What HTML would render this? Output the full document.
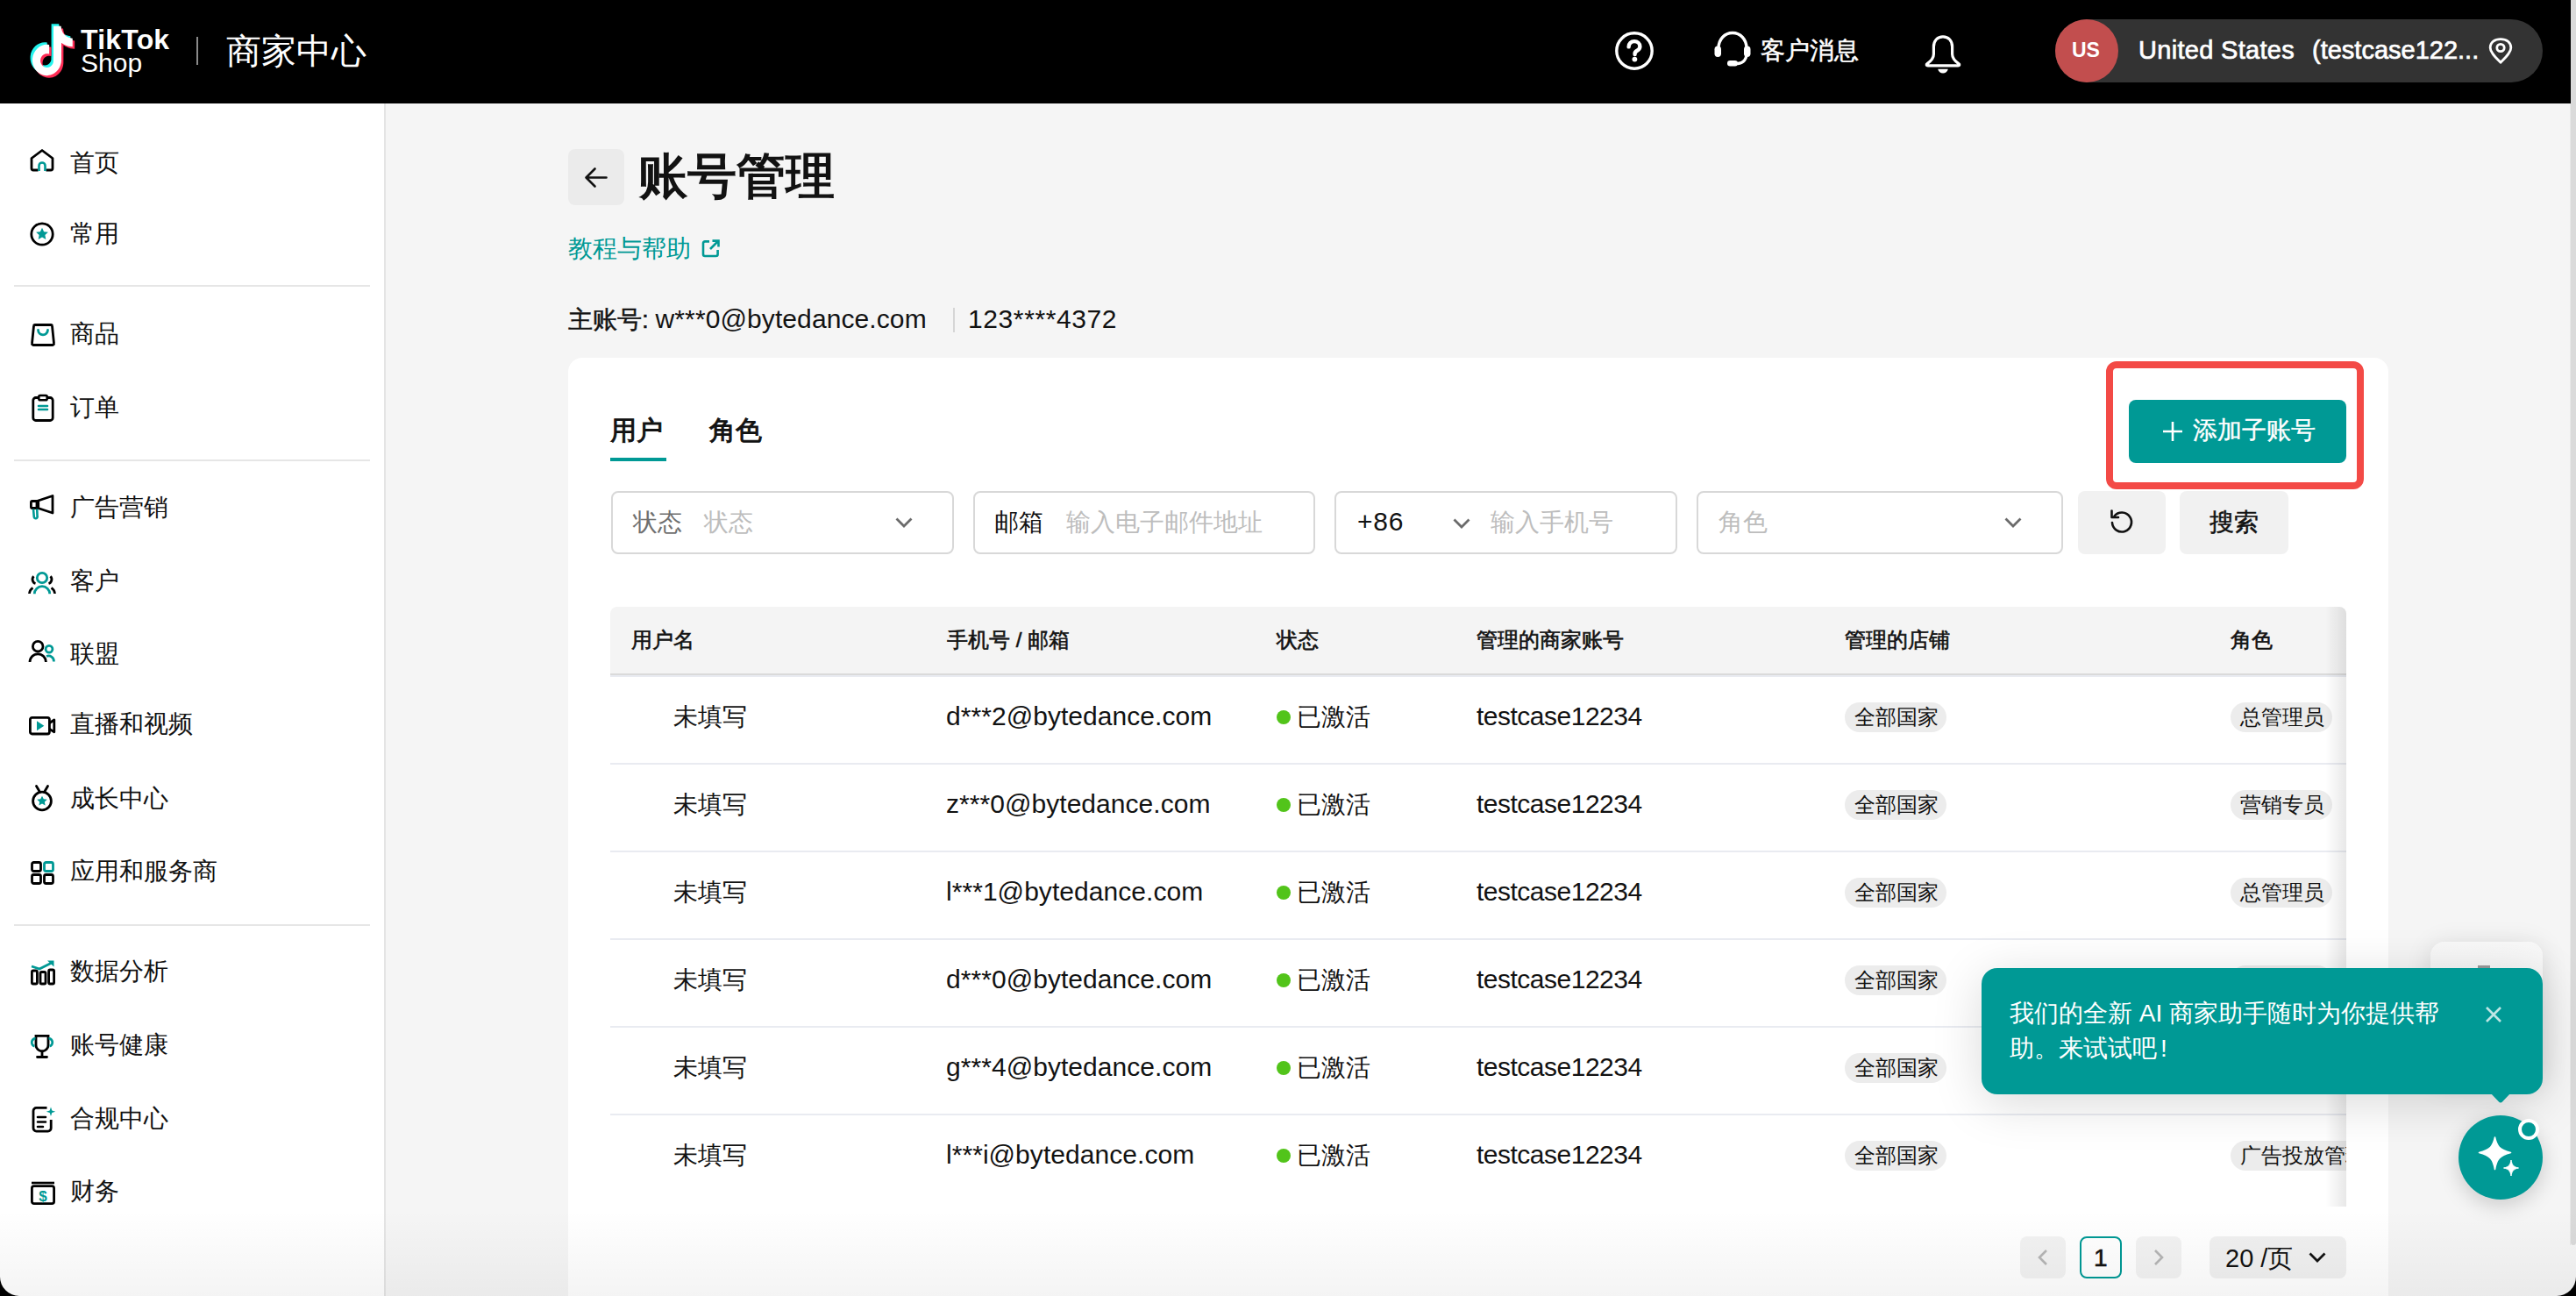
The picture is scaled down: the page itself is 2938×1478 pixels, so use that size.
<!DOCTYPE html><html><head><meta charset='utf-8'><style>
*{box-sizing:border-box}
html,body{margin:0;padding:0}
body{width:2938px;height:1478px;position:relative;overflow:hidden;background:#f5f5f5;font-family:"Liberation Sans",sans-serif;color:#121212}
.abs{position:absolute}
.t{position:absolute;white-space:nowrap;line-height:1}
svg{position:absolute;overflow:visible}
</style></head><body><div class="abs" style="left:0;top:0;width:2932px;height:118px;background:#000"></div>
<div class="abs" style="left:2932px;top:0;width:6px;height:1420px;background:#dadada;border-radius:0 0 3px 3px"></div>
<div class="abs" style="left:2931px;top:118px;width:1px;height:1302px;background:#e8e8e8"></div>
<svg style="left:32px;top:27px" width="54" height="62" viewBox="-0.7 -1.2 24.6 26.4" preserveAspectRatio="none">
<path d="M12.525.02c1.31-.02 2.61-.01 3.91-.02.08 1.53.63 3.09 1.75 4.17 1.12 1.11 2.7 1.62 4.24 1.79v4.03c-1.44-.05-2.89-.35-4.2-.97-.57-.26-1.1-.59-1.62-.93-.01 2.92.01 5.84-.02 8.75-.08 1.4-.54 2.79-1.35 3.94-1.31 1.920-3.58 3.17-5.91 3.21-1.43.08-2.86-.31-4.08-1.03-2.02-1.19-3.44-3.37-3.65-5.710-.02-.5-.03-1-.01-1.49.18-1.9 1.12-3.72 2.58-4.96 1.66-1.440 3.98-2.13 6.15-1.72.02 1.48-.04 2.96-.04 4.44-.99-.32-2.15-.23-3.02.37-.63.41-1.11 1.04-1.36 1.750-.21.51-.15 1.07-.14 1.61.24 1.64 1.82 3.02 3.5 2.87 1.12-.01 2.19-.66 2.77-1.61.19-.33.4-.67.41-1.06.1-1.79.06-3.57.07-5.36.01-4.03-.01-8.05.02-12.07z" fill="#25f4ee" transform="translate(-1.1,-1.1)"/><path d="M12.525.02c1.31-.02 2.61-.01 3.91-.02.08 1.53.63 3.09 1.75 4.17 1.12 1.11 2.7 1.62 4.24 1.79v4.03c-1.44-.05-2.89-.35-4.2-.97-.57-.26-1.1-.59-1.62-.93-.01 2.92.01 5.84-.02 8.75-.08 1.4-.54 2.79-1.35 3.94-1.31 1.920-3.58 3.17-5.91 3.21-1.43.08-2.86-.31-4.08-1.03-2.02-1.19-3.44-3.37-3.65-5.710-.02-.5-.03-1-.01-1.49.18-1.9 1.12-3.72 2.58-4.96 1.66-1.440 3.98-2.13 6.15-1.72.02 1.48-.04 2.96-.04 4.44-.99-.32-2.15-.23-3.02.37-.63.41-1.11 1.04-1.36 1.750-.21.51-.15 1.07-.14 1.61.24 1.64 1.82 3.02 3.5 2.87 1.12-.01 2.19-.66 2.77-1.61.19-.33.4-.67.41-1.06.1-1.79.06-3.57.07-5.36.01-4.03-.01-8.05.02-12.07z" fill="#fe2c55" transform="translate(1.1,1.1)"/><path d="M12.525.02c1.31-.02 2.61-.01 3.91-.02.08 1.53.63 3.09 1.75 4.17 1.12 1.11 2.7 1.62 4.24 1.79v4.03c-1.44-.05-2.89-.35-4.2-.97-.57-.26-1.1-.59-1.62-.93-.01 2.92.01 5.84-.02 8.75-.08 1.4-.54 2.79-1.35 3.94-1.31 1.920-3.58 3.17-5.91 3.21-1.43.08-2.86-.31-4.08-1.03-2.02-1.19-3.44-3.37-3.65-5.710-.02-.5-.03-1-.01-1.49.18-1.9 1.12-3.72 2.58-4.96 1.66-1.440 3.98-2.13 6.15-1.72.02 1.48-.04 2.96-.04 4.44-.99-.32-2.15-.23-3.02.37-.63.41-1.11 1.04-1.36 1.750-.21.51-.15 1.07-.14 1.61.24 1.64 1.82 3.02 3.5 2.87 1.12-.01 2.19-.66 2.77-1.61.19-.33.4-.67.41-1.06.1-1.79.06-3.57.07-5.36.01-4.03-.01-8.05.02-12.07z" fill="#fff"/></svg>
<div class="t" style="left:92px;top:29px;font-size:32px;font-weight:bold;color:#fff;letter-spacing:0.2px">TikTok</div>
<div class="t" style="left:92px;top:57px;font-size:30px;color:#fff">Shop</div>
<div class="abs" style="left:224px;top:42px;width:2px;height:32px;background:#8a8a8a"></div>
<div class="t" style="left:258px;top:38px;font-size:40px;color:#fff">商家中心</div>
<svg style="left:1842px;top:36px" width="44" height="44" viewBox="0 0 44 44">
<circle cx="22" cy="22" r="20.2" fill="none" stroke="#fff" stroke-width="3.4"/>
<path d="M15.6 17.4c0-3.7 2.8-6.3 6.4-6.3s6.4 2.5 6.4 5.8c0 3-2 4.2-3.6 5.1-1.5.9-2.2 1.6-2.2 3.1v1" fill="none" stroke="#fff" stroke-width="4.4" stroke-linecap="round"/>
<circle cx="22.4" cy="31.6" r="2.9" fill="#fff"/></svg>
<svg style="left:1955px;top:34px" width="42" height="42" viewBox="0 0 42 42">
<path d="M5 21C5 11 12 3.5 21 3.5S37 11 37 21v6c0 6-3 11-10 11.5" fill="none" stroke="#fff" stroke-width="3.4" stroke-linecap="round"/>
<rect x="0.5" y="18.5" width="7.5" height="12.5" rx="3.7" fill="#fff"/>
<rect x="34" y="18.5" width="7.5" height="12.5" rx="3.7" fill="#fff"/>
<rect x="15" y="35" width="12" height="6.5" rx="3.2" fill="#fff"/></svg>
<div class="t" style="left:2008px;top:44px;font-size:28px;color:#fff;-webkit-text-stroke:0.5px #fff">客户消息</div>
<svg style="left:2195px;top:40px" width="42" height="44" viewBox="0 0 42 44">
<path d="M21 1.8c-6.3 0-10.6 4.8-10.6 11.5v8.5c0 4.6-3.5 8.2-7.3 10.8-1.5 1-0.9 2.3 0.7 2.3h34.4c1.6 0 2.2-1.3 0.7-2.3-3.8-2.6-7.3-6.2-7.3-10.8v-8.5C31.6 6.6 27.3 1.8 21 1.8z" fill="none" stroke="#fff" stroke-width="3.2" stroke-linejoin="round"/>
<path d="M15.2 38.8h11.6c-.6 3-3 4.8-5.8 4.8s-5.2-1.8-5.8-4.8z" fill="#fff"/></svg>
<div class="abs" style="left:2344px;top:22px;width:556px;height:72px;border-radius:36px;background:#333333"></div>
<div class="abs" style="left:2344px;top:22px;width:72px;height:72px;border-radius:36px;background:#c24e4e"></div>
<div class="t" style="left:2363px;top:46px;font-size:23px;font-weight:bold;color:#fff">US</div>
<div class="t" style="left:2439px;top:43px;font-size:29px;color:#fff;-webkit-text-stroke:0.7px #fff;letter-spacing:0.3px">United States</div>
<div class="t" style="left:2637px;top:43px;font-size:29px;color:#fff;-webkit-text-stroke:0.7px #fff;letter-spacing:0px">(testcase122...</div>
<svg style="left:2838px;top:43px" width="28" height="30" viewBox="0 0 28 30">
<path d="M14 28.3C8.5 22.5 2.2 16.8 2.2 11.4 2.2 5 7.4 1.6 14 1.6S25.8 5 25.8 11.4c0 5.4-6.3 11.1-11.8 16.9z" fill="none" stroke="#fff" stroke-width="2.8" stroke-linejoin="round"/>
<circle cx="14" cy="11.5" r="4.2" fill="none" stroke="#fff" stroke-width="2.8"/></svg>
<div class="abs" style="left:0;top:118px;width:438px;height:1360px;background:#fff"></div>
<div class="abs" style="left:438px;top:118px;width:2px;height:1360px;background:#e4e4e4"></div>
<div class="abs" style="left:16px;top:325px;width:406px;height:2px;background:#e6e6e6"></div>
<div class="abs" style="left:16px;top:524px;width:406px;height:2px;background:#e6e6e6"></div>
<div class="abs" style="left:16px;top:1054px;width:406px;height:2px;background:#e6e6e6"></div>
<svg style="left:34px;top:168px" width="28" height="28" viewBox="0 0 28 28"><path d="M2 12.5L14 3.5l12 9V24a2 2 0 0 1-2 2H4a2 2 0 0 1-2-2z" fill="none" stroke="#000" stroke-width="2.8" stroke-linejoin="round"/><rect x="9.5" y="17" width="9" height="11" fill="#fff"/><path d="M10.5 27v-6a3.5 3.5 0 0 1 7 0v6" fill="none" stroke="#009995" stroke-width="2.6"/></svg>
<div class="t" style="left:80px;top:172px;font-size:28px;color:#121212">首页</div>
<svg style="left:34px;top:253px" width="28" height="28" viewBox="0 0 28 28"><circle cx="14" cy="14" r="12.2" fill="none" stroke="#000" stroke-width="2.8"/><path d="M14 6.8l2.1 4.4 4.8.6-3.5 3.3.9 4.8-4.3-2.3-4.3 2.3.9-4.8-3.5-3.3 4.8-.6z" fill="#009995"/></svg>
<div class="t" style="left:80px;top:253px;font-size:28px;color:#121212">常用</div>
<svg style="left:35px;top:368px" width="28" height="27" viewBox="0 0 28 27"><path d="M5 2.5h18a1.5 1.5 0 0 1 1.5 1.4l2 19.8a1.5 1.5 0 0 1-1.5 1.8H3a1.5 1.5 0 0 1-1.5-1.8l2-19.8A1.5 1.5 0 0 1 5 2.5z" fill="none" stroke="#000" stroke-width="2.8" stroke-linejoin="round"/><path d="M8.5 8.3a5.5 5.5 0 0 0 11 0" fill="none" stroke="#009995" stroke-width="2.8" stroke-linecap="round"/></svg>
<div class="t" style="left:80px;top:367px;font-size:28px;color:#121212">商品</div>
<svg style="left:36px;top:450px" width="26" height="31" viewBox="0 0 26 31"><rect x="1.8" y="3.5" width="22.4" height="26" rx="3" fill="none" stroke="#000" stroke-width="2.8"/><rect x="8.3" y="1" width="9.4" height="5.2" rx="1.5" fill="#fff" stroke="#000" stroke-width="2.6"/><path d="M8 13h10M8 17h10" stroke="#009995" stroke-width="2.6" stroke-linecap="round"/></svg>
<div class="t" style="left:80px;top:451px;font-size:28px;color:#121212">订单</div>
<svg style="left:34px;top:565px" width="28" height="27" viewBox="0 0 28 27"><path d="M8 6.5l18-6v19.5l-18-6z" fill="none" stroke="#000" stroke-width="2.8" stroke-linejoin="round"/><rect x="1.4" y="6.5" width="8.3" height="8" rx="1.5" fill="none" stroke="#000" stroke-width="2.8"/><path d="M4 15.5l.8 9a1.9 1.9 0 0 0 3.8-.3l-.4-8.7" fill="none" stroke="#009995" stroke-width="2.6"/></svg>
<div class="t" style="left:80px;top:565px;font-size:28px;color:#121212">广告营销</div>
<svg style="left:32px;top:651px" width="32" height="27" viewBox="0 0 32 27"><circle cx="16" cy="8" r="5.7" fill="none" stroke="#009995" stroke-width="2.8"/><path d="M7.3 26.3a8.7 8.7 0 0 1 17.4 0" fill="none" stroke="#009995" stroke-width="2.8"/><path d="M6.5 6.2a5 5 0 0 0 2 8.3M25.5 6.2a5 5 0 0 1-2 8.3M1.5 26a8 8 0 0 1 4-6.5M30.5 26a8 8 0 0 0-4-6.5" fill="none" stroke="#000" stroke-width="2.8"/></svg>
<div class="t" style="left:80px;top:649px;font-size:28px;color:#121212">客户</div>
<svg style="left:33px;top:730px" width="29" height="27" viewBox="0 0 29 27"><circle cx="10.2" cy="7.2" r="5.8" fill="none" stroke="#000" stroke-width="2.8"/><path d="M1 25a9.2 9.2 0 0 1 18.4 0" fill="none" stroke="#000" stroke-width="2.8"/><circle cx="23" cy="10.2" r="3.9" fill="none" stroke="#009995" stroke-width="2.8"/><path d="M20 18.5a6 6 0 0 1 8.4 6" fill="none" stroke="#009995" stroke-width="2.8"/></svg>
<div class="t" style="left:80px;top:732px;font-size:28px;color:#121212">联盟</div>
<svg style="left:33px;top:817px" width="30" height="23" viewBox="0 0 30 23"><rect x="1.4" y="1.4" width="22" height="18.6" rx="2.2" fill="none" stroke="#000" stroke-width="2.8"/><path d="M23.5 7.5l5.3-3.5v13.8l-5.3-3.5" fill="none" stroke="#000" stroke-width="2.8" stroke-linejoin="round"/><path d="M9 5.3l8.3 5.5-8.3 5.5z" fill="#009995"/></svg>
<div class="t" style="left:80px;top:812px;font-size:28px;color:#121212">直播和视频</div>
<svg style="left:36px;top:895px" width="25" height="31" viewBox="0 0 25 31"><circle cx="12" cy="18.5" r="10.4" fill="none" stroke="#000" stroke-width="2.8"/><path d="M5.5 1.5l3.8 6.5M18.5 1.5l-3.8 6.5" stroke="#000" stroke-width="2.8" stroke-linecap="round"/><path d="M12 12.7l1.8 3.6 4 .5-2.9 2.8.7 3.9-3.6-1.9-3.6 1.9.7-3.9-2.9-2.8 4-.5z" fill="#009995"/></svg>
<div class="t" style="left:80px;top:897px;font-size:28px;color:#121212">成长中心</div>
<svg style="left:35px;top:982px" width="27" height="27" viewBox="0 0 27 27"><rect x="1.5" y="1.5" width="10" height="10" rx="2" fill="none" stroke="#000" stroke-width="2.8"/><rect x="15.5" y="1.5" width="10" height="10" rx="2" fill="none" stroke="#009995" stroke-width="2.8"/><rect x="1.5" y="15.5" width="10" height="10" rx="2" fill="none" stroke="#000" stroke-width="2.8"/><rect x="15.5" y="15.5" width="10" height="10" rx="2" fill="none" stroke="#000" stroke-width="2.8"/></svg>
<div class="t" style="left:80px;top:980px;font-size:28px;color:#121212">应用和服务商</div>
<svg style="left:35px;top:1095px" width="28" height="28" viewBox="0 0 28 28"><rect x="1.4" y="12" width="6" height="15" rx="1.5" fill="none" stroke="#000" stroke-width="2.8"/><rect x="11" y="13.5" width="6" height="13.5" rx="1.5" fill="none" stroke="#000" stroke-width="2.8"/><rect x="20.6" y="11" width="6" height="16" rx="1.5" fill="none" stroke="#000" stroke-width="2.8"/><path d="M1 7l9 3 14-7" fill="none" stroke="#009995" stroke-width="2.8"/><path d="M19 0.5h7.5v7z" fill="#009995"/></svg>
<div class="t" style="left:80px;top:1094px;font-size:28px;color:#121212">数据分析</div>
<svg style="left:34px;top:1180px" width="28" height="28" viewBox="0 0 28 28"><path d="M7 1.4h14v10.5a7 7 0 0 1-14 0z" fill="none" stroke="#000" stroke-width="2.8"/><path d="M14 19v6M8.5 25.5h11" stroke="#000" stroke-width="2.8" stroke-linecap="round"/><path d="M6.5 4.5a3.5 4 0 0 0-1 8.5M21.5 4.5a3.5 4 0 0 1 1 8.5" fill="none" stroke="#009995" stroke-width="2.8"/></svg>
<div class="t" style="left:80px;top:1178px;font-size:28px;color:#121212">账号健康</div>
<svg style="left:36px;top:1262px" width="28" height="30" viewBox="0 0 28 30"><path d="M17.5 1.4H5.5a3.5 3.5 0 0 0-3.5 3.5v19.7a3.5 3.5 0 0 0 3.5 3.5h13.2a3.5 3.5 0 0 0 3.5-3.5V15" fill="none" stroke="#000" stroke-width="2.8"/><path d="M7 12h9M7 17.5h9M7 23h6" stroke="#000" stroke-width="2.6" stroke-linecap="round"/><path d="M22 0.5l1.3 3.9 3.9 1.3-3.9 1.3L22 10.9l-1.3-3.9-3.9-1.3 3.9-1.3z" fill="#009995"/></svg>
<div class="t" style="left:80px;top:1262px;font-size:28px;color:#121212">合规中心</div>
<svg style="left:35px;top:1347px" width="28" height="27" viewBox="0 0 28 27"><path d="M1 2h26" stroke="#000" stroke-width="2.6"/><rect x="1.4" y="5.6" width="25.2" height="20" rx="2.4" fill="none" stroke="#000" stroke-width="2.8"/><text x="14" y="22.8" text-anchor="middle" font-family="Liberation Sans" font-weight="bold" font-size="17" fill="#009995">$</text></svg>
<div class="t" style="left:80px;top:1345px;font-size:28px;color:#121212">财务</div>
<div class="abs" style="left:648px;top:170px;width:64px;height:64px;border-radius:8px;background:#ebebeb"></div>
<svg style="left:666px;top:189px" width="28" height="28" viewBox="0 0 28 28"><path d="M25.5 13.5H3M12.5 3.5L2.5 13.5l10 10" fill="none" stroke="#121212" stroke-width="2.6" stroke-linecap="round" stroke-linejoin="round"/></svg>
<div class="t" style="left:728px;top:173px;font-size:56px;font-weight:bold;color:#121212">账号管理</div>
<div class="t" style="left:648px;top:270px;font-size:28px;color:#009995">教程与帮助</div>
<svg style="left:800px;top:273px" width="21" height="21" viewBox="0 0 21 21"><path d="M9 2.4H4a2 2 0 0 0-2 2V17a2 2 0 0 0 2 2h12.6a2 2 0 0 0 2-2v-5" fill="none" stroke="#009995" stroke-width="2.6"/><path d="M10 11L19 2M12.5 1.6h7v7" fill="none" stroke="#009995" stroke-width="2.6"/></svg>
<div class="t" style="left:648px;top:349px;font-size:28px;color:#121212"><span style="-webkit-text-stroke:0.5px #121212">主账号:</span> <span style="font-size:30px;letter-spacing:0.1px">w***0@bytedance.com</span></div>
<div class="abs" style="left:1087px;top:351px;width:2px;height:28px;background:#d6d6d6"></div>
<div class="t" style="left:1104px;top:349px;font-size:30px;letter-spacing:0.6px;color:#121212">123****4372</div>
<div class="abs" style="left:648px;top:408px;width:2076px;height:1200px;border-radius:16px;background:#fff"></div>
<div class="t" style="left:696px;top:476px;font-size:30px;-webkit-text-stroke:1px #121212;color:#121212">用户</div>
<div class="abs" style="left:696px;top:522px;width:64px;height:4px;background:#009995"></div>
<div class="t" style="left:809px;top:476px;font-size:30px;-webkit-text-stroke:1px #121212;color:#121212">角色</div>
<div class="abs" style="left:2402px;top:412px;width:294px;height:146px;border:8px solid #f34a46;border-radius:12px"></div>
<div class="abs" style="left:2428px;top:456px;width:248px;height:72px;border-radius:8px;background:#009995"></div>
<svg style="left:2466px;top:480px" width="24" height="24" viewBox="0 0 24 24"><path d="M12 1v22M1 12h22" stroke="#fff" stroke-width="2.6"/></svg>
<div class="t" style="left:2501px;top:477px;font-size:28px;color:#fff;-webkit-text-stroke:0.4px #fff">添加子账号</div>
<div class="abs" style="left:697px;top:560px;width:391px;height:72px;border:2px solid #d8d8d8;border-radius:8px;background:#fff"></div>
<div class="abs" style="left:1110px;top:560px;width:390px;height:72px;border:2px solid #d8d8d8;border-radius:8px;background:#fff"></div>
<div class="abs" style="left:1522px;top:560px;width:391px;height:72px;border:2px solid #d8d8d8;border-radius:8px;background:#fff"></div>
<div class="abs" style="left:1935px;top:560px;width:418px;height:72px;border:2px solid #d8d8d8;border-radius:8px;background:#fff"></div>
<div class="t" style="left:722px;top:582px;font-size:28px;color:#6f6f6f">状态</div>
<div class="t" style="left:803px;top:582px;font-size:28px;color:#bdbdbd">状态</div>
<svg style="left:1021px;top:590px" width="20" height="12" viewBox="0 0 20 12"><path d="M1.5 1.5L10 10l8.5-8.5" fill="none" stroke="#6b6b6b" stroke-width="2.8"/></svg>
<div class="t" style="left:1134px;top:582px;font-size:28px;color:#121212">邮箱</div>
<div class="t" style="left:1216px;top:582px;font-size:28px;color:#bdbdbd">输入电子邮件地址</div>
<div class="t" style="left:1548px;top:580px;font-size:30px;letter-spacing:0.8px;color:#121212">+86</div>
<svg style="left:1657px;top:591px" width="20" height="12" viewBox="0 0 20 12"><path d="M1.5 1.5L10 10l8.5-8.5" fill="none" stroke="#6b6b6b" stroke-width="2.8"/></svg>
<div class="t" style="left:1700px;top:582px;font-size:28px;color:#bdbdbd">输入手机号</div>
<div class="t" style="left:1960px;top:582px;font-size:28px;color:#bdbdbd">角色</div>
<svg style="left:2286px;top:590px" width="20" height="12" viewBox="0 0 20 12"><path d="M1.5 1.5L10 10l8.5-8.5" fill="none" stroke="#6b6b6b" stroke-width="2.8"/></svg>
<div class="abs" style="left:2370px;top:560px;width:100px;height:72px;border-radius:8px;background:#f1f1f1"></div>
<svg style="left:2405px;top:580px" width="30" height="30" viewBox="0 0 30 30"><path d="M6.5 8.5A11 11 0 1 1 4 16" fill="none" stroke="#121212" stroke-width="2.6" stroke-linecap="round"/><path d="M3.5 2.5v7.5H11" fill="none" stroke="#121212" stroke-width="2.6" stroke-linecap="round" stroke-linejoin="round"/></svg>
<div class="abs" style="left:2486px;top:560px;width:124px;height:72px;border-radius:8px;background:#f1f1f1"></div>
<div class="t" style="left:2520px;top:582px;font-size:28px;-webkit-text-stroke:0.5px #121212;color:#121212">搜索</div>
<div class="abs" style="left:696px;top:692px;width:1980px;height:78px;background:#f4f4f4;border-radius:8px 8px 0 0"></div>
<div class="abs" style="left:696px;top:768px;width:1980px;height:2px;background:#dadada"></div>
<div class="abs" style="left:696px;top:770px;width:1980px;height:2px;background:#e9ebf1"></div>
<div class="t" style="left:720px;top:718px;font-size:24px;-webkit-text-stroke:0.6px #121212;color:#121212">用户名</div>
<div class="t" style="left:1080px;top:718px;font-size:24px;-webkit-text-stroke:0.6px #121212;color:#121212">手机号 / 邮箱</div>
<div class="t" style="left:1456px;top:718px;font-size:24px;-webkit-text-stroke:0.6px #121212;color:#121212">状态</div>
<div class="t" style="left:1684px;top:718px;font-size:24px;-webkit-text-stroke:0.6px #121212;color:#121212">管理的商家账号</div>
<div class="t" style="left:2104px;top:718px;font-size:24px;-webkit-text-stroke:0.6px #121212;color:#121212">管理的店铺</div>
<div class="t" style="left:2544px;top:718px;font-size:24px;-webkit-text-stroke:0.6px #121212;color:#121212">角色</div>
<div class="abs" style="left:696px;top:870px;width:1980px;height:2px;background:#e9ebf1"></div>
<div class="t" style="left:768px;top:804px;font-size:28px;color:#121212">未填写</div>
<div class="t" style="left:1079px;top:802px;font-size:30px;letter-spacing:0.05px;color:#121212">d***2@bytedance.com</div>
<div class="abs" style="left:1456px;top:810px;width:16px;height:16px;border-radius:8px;background:#52c41a"></div>
<div class="t" style="left:1479px;top:804px;font-size:28px;color:#121212">已激活</div>
<div class="t" style="left:1684px;top:802px;font-size:30px;letter-spacing:-0.5px;color:#121212">testcase12234</div>
<div class="abs" style="left:2104px;top:801px;width:116px;height:34px;border-radius:17px;background:#ececec"></div>
<div class="t" style="left:2115px;top:806px;font-size:24px;color:#121212">全部国家</div>
<div class="abs" style="left:696px;top:970px;width:1980px;height:2px;background:#e9ebf1"></div>
<div class="t" style="left:768px;top:904px;font-size:28px;color:#121212">未填写</div>
<div class="t" style="left:1079px;top:902px;font-size:30px;letter-spacing:0.05px;color:#121212">z***0@bytedance.com</div>
<div class="abs" style="left:1456px;top:910px;width:16px;height:16px;border-radius:8px;background:#52c41a"></div>
<div class="t" style="left:1479px;top:904px;font-size:28px;color:#121212">已激活</div>
<div class="t" style="left:1684px;top:902px;font-size:30px;letter-spacing:-0.5px;color:#121212">testcase12234</div>
<div class="abs" style="left:2104px;top:901px;width:116px;height:34px;border-radius:17px;background:#ececec"></div>
<div class="t" style="left:2115px;top:906px;font-size:24px;color:#121212">全部国家</div>
<div class="abs" style="left:696px;top:1070px;width:1980px;height:2px;background:#e9ebf1"></div>
<div class="t" style="left:768px;top:1004px;font-size:28px;color:#121212">未填写</div>
<div class="t" style="left:1079px;top:1002px;font-size:30px;letter-spacing:0.05px;color:#121212">l***1@bytedance.com</div>
<div class="abs" style="left:1456px;top:1010px;width:16px;height:16px;border-radius:8px;background:#52c41a"></div>
<div class="t" style="left:1479px;top:1004px;font-size:28px;color:#121212">已激活</div>
<div class="t" style="left:1684px;top:1002px;font-size:30px;letter-spacing:-0.5px;color:#121212">testcase12234</div>
<div class="abs" style="left:2104px;top:1001px;width:116px;height:34px;border-radius:17px;background:#ececec"></div>
<div class="t" style="left:2115px;top:1006px;font-size:24px;color:#121212">全部国家</div>
<div class="abs" style="left:696px;top:1170px;width:1980px;height:2px;background:#e9ebf1"></div>
<div class="t" style="left:768px;top:1104px;font-size:28px;color:#121212">未填写</div>
<div class="t" style="left:1079px;top:1102px;font-size:30px;letter-spacing:0.05px;color:#121212">d***0@bytedance.com</div>
<div class="abs" style="left:1456px;top:1110px;width:16px;height:16px;border-radius:8px;background:#52c41a"></div>
<div class="t" style="left:1479px;top:1104px;font-size:28px;color:#121212">已激活</div>
<div class="t" style="left:1684px;top:1102px;font-size:30px;letter-spacing:-0.5px;color:#121212">testcase12234</div>
<div class="abs" style="left:2104px;top:1101px;width:116px;height:34px;border-radius:17px;background:#ececec"></div>
<div class="t" style="left:2115px;top:1106px;font-size:24px;color:#121212">全部国家</div>
<div class="abs" style="left:696px;top:1270px;width:1980px;height:2px;background:#e9ebf1"></div>
<div class="t" style="left:768px;top:1204px;font-size:28px;color:#121212">未填写</div>
<div class="t" style="left:1079px;top:1202px;font-size:30px;letter-spacing:0.05px;color:#121212">g***4@bytedance.com</div>
<div class="abs" style="left:1456px;top:1210px;width:16px;height:16px;border-radius:8px;background:#52c41a"></div>
<div class="t" style="left:1479px;top:1204px;font-size:28px;color:#121212">已激活</div>
<div class="t" style="left:1684px;top:1202px;font-size:30px;letter-spacing:-0.5px;color:#121212">testcase12234</div>
<div class="abs" style="left:2104px;top:1201px;width:116px;height:34px;border-radius:17px;background:#ececec"></div>
<div class="t" style="left:2115px;top:1206px;font-size:24px;color:#121212">全部国家</div>
<div class="t" style="left:768px;top:1304px;font-size:28px;color:#121212">未填写</div>
<div class="t" style="left:1079px;top:1302px;font-size:30px;letter-spacing:0.05px;color:#121212">l***i@bytedance.com</div>
<div class="abs" style="left:1456px;top:1310px;width:16px;height:16px;border-radius:8px;background:#52c41a"></div>
<div class="t" style="left:1479px;top:1304px;font-size:28px;color:#121212">已激活</div>
<div class="t" style="left:1684px;top:1302px;font-size:30px;letter-spacing:-0.5px;color:#121212">testcase12234</div>
<div class="abs" style="left:2104px;top:1301px;width:116px;height:34px;border-radius:17px;background:#ececec"></div>
<div class="t" style="left:2115px;top:1306px;font-size:24px;color:#121212">全部国家</div>
<div class="abs" style="left:2520px;top:772px;width:156px;height:604px;overflow:hidden">
<div class="abs" style="left:24px;top:29px;width:116px;height:34px;border-radius:17px;background:#ececec"></div>
<div class="t" style="left:35px;top:34px;font-size:24px;color:#121212">总管理员</div>
<div class="abs" style="left:24px;top:129px;width:116px;height:34px;border-radius:17px;background:#ececec"></div>
<div class="t" style="left:35px;top:134px;font-size:24px;color:#121212">营销专员</div>
<div class="abs" style="left:24px;top:229px;width:116px;height:34px;border-radius:17px;background:#ececec"></div>
<div class="t" style="left:35px;top:234px;font-size:24px;color:#121212">总管理员</div>
<div class="abs" style="left:24px;top:329px;width:116px;height:34px;border-radius:17px;background:#ececec"></div>
<div class="t" style="left:35px;top:334px;font-size:24px;color:#121212">总管理员</div>
<div class="abs" style="left:24px;top:429px;width:116px;height:34px;border-radius:17px;background:#ececec"></div>
<div class="t" style="left:35px;top:434px;font-size:24px;color:#121212">总管理员</div>
<div class="abs" style="left:24px;top:529px;width:200px;height:34px;border-radius:17px;background:#ececec"></div>
<div class="t" style="left:35px;top:534px;font-size:24px;color:#121212">广告投放管理员</div>
</div>
<div class="abs" style="left:2652px;top:692px;width:24px;height:684px;background:linear-gradient(to right,rgba(0,0,0,0),rgba(0,0,0,0.09));border-radius:0 8px 0 0"></div>
<div class="abs" style="left:2304px;top:1410px;width:52px;height:48px;border-radius:8px;background:#f2f2f2"></div>
<svg style="left:2324px;top:1424px" width="12" height="20" viewBox="0 0 12 20"><path d="M10 2L2 10l8 8" fill="none" stroke="#b5b5b5" stroke-width="2.6"/></svg>
<div class="abs" style="left:2372px;top:1410px;width:48px;height:48px;border-radius:8px;border:2px solid #009995;background:#fff"></div>
<div class="t" style="left:2388px;top:1421px;font-size:28px;color:#121212;-webkit-text-stroke:0.6px #121212">1</div>
<div class="abs" style="left:2436px;top:1410px;width:52px;height:48px;border-radius:8px;background:#f2f2f2"></div>
<svg style="left:2456px;top:1424px" width="12" height="20" viewBox="0 0 12 20"><path d="M2 2l8 8-8 8" fill="none" stroke="#b5b5b5" stroke-width="2.6"/></svg>
<div class="abs" style="left:2520px;top:1410px;width:156px;height:48px;border-radius:8px;background:#f0f0f0"></div>
<div class="t" style="left:2538px;top:1421px;font-size:29px;color:#121212">20 /页</div>
<svg style="left:2633px;top:1428px" width="20" height="12" viewBox="0 0 20 12"><path d="M1.5 1.5L10 10l8.5-8.5" fill="none" stroke="#121212" stroke-width="2.8"/></svg>
<div class="abs" style="left:2772px;top:1074px;width:128px;height:160px;border-radius:16px;background:linear-gradient(#f8f8f8,#f0f0f0);box-shadow:0 4px 30px rgba(0,0,0,0.12)"></div>
<div class="abs" style="left:2826px;top:1101px;width:14px;height:3px;background:#9a9a9a"></div>
<div class="abs" style="left:2260px;top:1104px;width:640px;height:144px;border-radius:18px;background:#009995;box-shadow:0 10px 56px rgba(0,0,0,0.15)"></div>
<svg style="left:2840px;top:1246px" width="24" height="12" viewBox="0 0 24 12"><path d="M0 0h24l-10 10.5a2.5 2.5 0 0 1-4 0z" fill="#009995"/></svg>
<div class="abs" style="left:2292px;top:1136px;width:500px;font-size:28px;line-height:40px;color:#fff">我们的全新 AI 商家助手随时为你提供帮助。来试试吧<span style="margin-left:4px">!</span></div>
<svg style="left:2834px;top:1147px" width="20" height="20" viewBox="0 0 20 20"><path d="M2 2l16 16M18 2L2 18" stroke="rgba(255,255,255,0.75)" stroke-width="2.6"/></svg>
<div class="abs" style="left:2804px;top:1272px;width:96px;height:96px;border-radius:48px;background:#009995;box-shadow:0 6px 24px rgba(0,0,0,0.18)"></div>
<svg style="left:2827px;top:1296px" width="48" height="48" viewBox="0 0 48 48"><path d="M18.5 1C20.5 11 23.5 15 36.5 18.5 23.5 22 20.5 26 18.5 37.5 16.5 26 13.5 22 0.5 18.5 13.5 15 16.5 11 18.5 1z" fill="#fff" stroke="#fff" stroke-width="1.6" stroke-linejoin="round"/><path d="M37 27C38 32 39 34.8 45.5 36 39 37.2 38 40 37 45 36 40 35 37.2 28.5 36 35 34.8 36 32 37 27z" fill="#fff" stroke="#fff" stroke-width="1" stroke-linejoin="round"/></svg>
<div class="abs" style="left:2872px;top:1276px;width:24px;height:24px;border-radius:12px;background:#009995;border:4px solid #fff"></div>
<div class="abs" style="left:0;top:1380px;width:2938px;height:98px;background:linear-gradient(to bottom,rgba(0,0,0,0),rgba(0,0,0,0.045))"></div>
<svg style="left:0;top:1456px" width="22" height="22" viewBox="0 0 22 22"><path d="M0 0A22 22 0 0 0 22 22H0z" fill="#000"/></svg>
<svg style="left:2916px;top:1456px" width="22" height="22" viewBox="0 0 22 22"><path d="M22 0A22 22 0 0 1 0 22H22z" fill="#000"/></svg></body></html>
